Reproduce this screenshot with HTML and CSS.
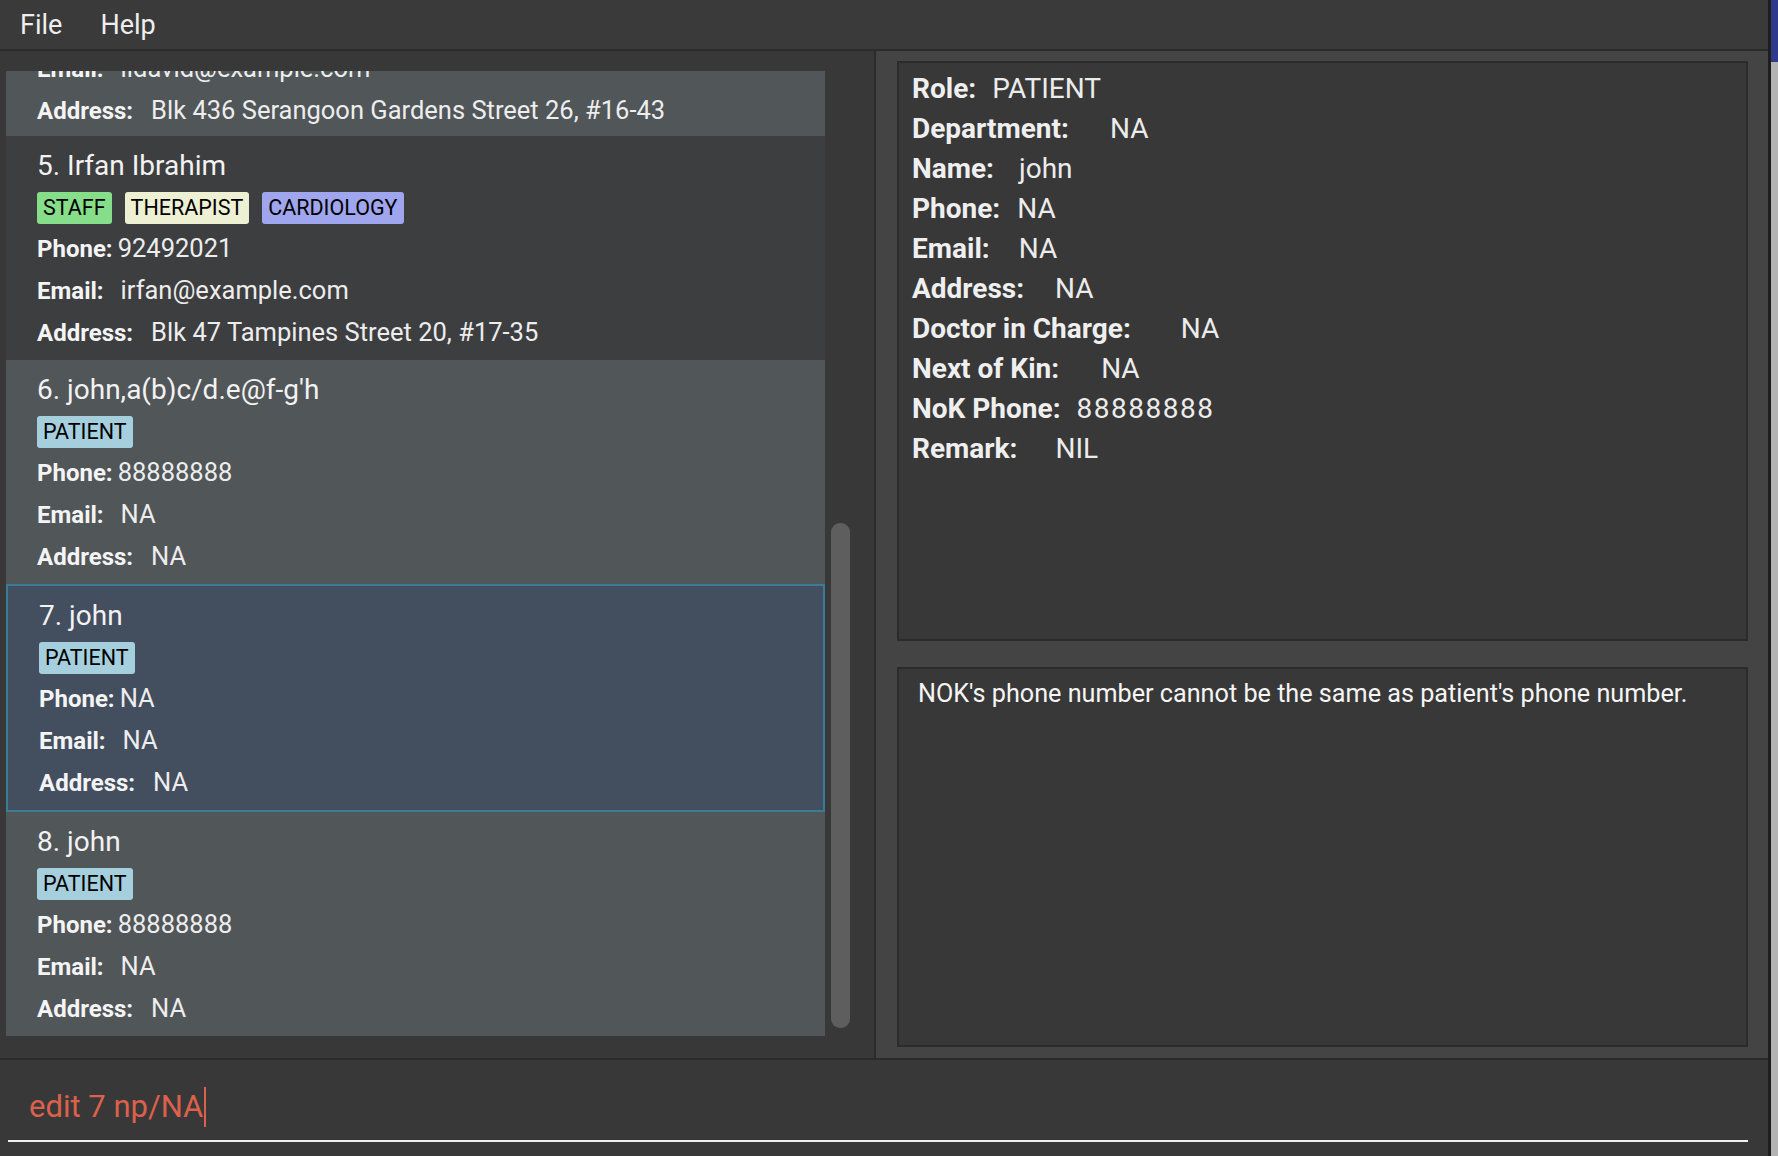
FILE: index.html
```html
<!DOCTYPE html>
<html>
<head>
<meta charset="utf-8">
<link rel="stylesheet" href="styles.css">
</head>
<body>
<div class="screen">
  <div class="window">
    <div class="menubar">
      <span class="menu-item">File</span>
      <span class="menu-item">Help</span>
    </div>
    <div class="main">
      <div class="left">
        <div class="list-wrap">
          <div class="list">
            <div class="card light first">
              <div class="row clipped"><span class="lbl">Email:</span><span class="val g-email">lidavid@example.com</span></div>
              <div class="row"><span class="lbl">Address:</span><span class="val g-addr">Blk 436 Serangoon Gardens Street 26, #16-43</span></div>
            </div>
            <div class="card dark">
              <div class="name">5. Irfan Ibrahim</div>
              <div class="tags"><span class="tag staff">STAFF</span><span class="tag therapist">THERAPIST</span><span class="tag cardio">CARDIOLOGY</span></div>
              <div class="row"><span class="lbl">Phone:</span><span class="val g-phone">92492021</span></div>
              <div class="row"><span class="lbl">Email:</span><span class="val g-email">irfan@example.com</span></div>
              <div class="row"><span class="lbl">Address:</span><span class="val g-addr">Blk 47 Tampines Street 20, #17-35</span></div>
            </div>
            <div class="card light">
              <div class="name">6. john,a(b)c/d.e@f-g'h</div>
              <div class="tags"><span class="tag patient">PATIENT</span></div>
              <div class="row"><span class="lbl">Phone:</span><span class="val g-phone">88888888</span></div>
              <div class="row"><span class="lbl">Email:</span><span class="val g-email">NA</span></div>
              <div class="row"><span class="lbl">Address:</span><span class="val g-addr">NA</span></div>
            </div>
            <div class="card selected">
              <div class="name">7. john</div>
              <div class="tags"><span class="tag patient">PATIENT</span></div>
              <div class="row"><span class="lbl">Phone:</span><span class="val g-phone">NA</span></div>
              <div class="row"><span class="lbl">Email:</span><span class="val g-email">NA</span></div>
              <div class="row"><span class="lbl">Address:</span><span class="val g-addr">NA</span></div>
            </div>
            <div class="card light">
              <div class="name">8. john</div>
              <div class="tags"><span class="tag patient">PATIENT</span></div>
              <div class="row"><span class="lbl">Phone:</span><span class="val g-phone">88888888</span></div>
              <div class="row"><span class="lbl">Email:</span><span class="val g-email">NA</span></div>
              <div class="row"><span class="lbl">Address:</span><span class="val g-addr">NA</span></div>
            </div>
          </div>
          <div class="scroll-track">
            <div class="thumb"></div>
          </div>
        </div>
      </div>
      <div class="right">
        <div class="box details">
          <div class="drow"><span class="dlbl">Role:</span><span class="dval g16">PATIENT</span></div>
          <div class="drow"><span class="dlbl">Department:</span><span class="dval g41">NA</span></div>
          <div class="drow"><span class="dlbl">Name:</span><span class="dval g25">john</span></div>
          <div class="drow"><span class="dlbl">Phone:</span><span class="dval g17">NA</span></div>
          <div class="drow"><span class="dlbl">Email:</span><span class="dval g29">NA</span></div>
          <div class="drow"><span class="dlbl">Address:</span><span class="dval g31">NA</span></div>
          <div class="drow"><span class="dlbl">Doctor in Charge:</span><span class="dval g50">NA</span></div>
          <div class="drow"><span class="dlbl">Next of Kin:</span><span class="dval g42">NA</span></div>
          <div class="drow"><span class="dlbl">NoK Phone:</span><span class="dval g16 digits">88888888</span></div>
          <div class="drow"><span class="dlbl">Remark:</span><span class="dval g38">NIL</span></div>
        </div>
        <div class="box message">
          <div class="msg">NOK's phone number cannot be the same as patient's phone number.</div>
        </div>
      </div>
    </div>
    <div class="command">
      <div class="cmd-line"><span class="cmd-text">edit 7 np/NA</span><span class="caret"></span></div>
    </div>
  </div>
  <div class="edge"><div class="edge-top"></div></div>
</div>
</body>
</html>
```
FILE: styles.css
```css
html, body {
  margin: 0;
  padding: 0;
}
body {
  width: 1778px;
  height: 1156px;
  overflow: hidden;
  background: #383838;
  font-family: Roboto, "Liberation Sans", sans-serif;
  color: #f2f2f2;
}
.screen {
  display: flex;
  width: 1778px;
  height: 1156px;
}
.window {
  width: 1768px;
  display: flex;
  flex-direction: column;
}
.edge {
  width: 7px;
  border-left: 3px solid #1e1e1e;
  background: #b4b4b4;
}
.edge-top {
  height: 62px;
  background: #2f3a8c;
}
.menubar {
  height: 49px;
  background: #3a3a3a;
  border-bottom: 2px solid #2b2b2b;
  display: flex;
  align-items: center;
  padding-left: 20px;
  gap: 38px;
}
.menu-item {
  font-size: 27px;
  color: #eeeeee;
  line-height: 46px;
}
.main {
  height: 1007px;
  display: flex;
  border-bottom: 2px solid #2b2b2b;
}
.left {
  width: 876px;
  border-right: 2px solid #2b2b2b;
  background: #383838;
  padding-top: 20px;
  box-sizing: border-box;
}
.list-wrap {
  display: flex;
  height: 965px;
}
.list {
  margin-left: 6px;
  width: 819px;
  overflow: hidden;
}
.scroll-track {
  flex: 1;
  position: relative;
}
.thumb {
  position: absolute;
  left: 6px;
  top: 452px;
  width: 19px;
  height: 505px;
  background: #5e5e5e;
  border-radius: 9px;
}
.card {
  height: 224px;
  box-sizing: border-box;
  padding: 12px 0 0 31px;
}
.card.first {
  height: 65px;
  padding-top: 0;
  overflow: hidden;
}
.row.clipped {
  margin-top: -24px;
}
.card.light {
  background: #515659;
}
.card.dark {
  background: #3d3e40;
}
.card.selected {
  background: #434e5f;
  border: 2px solid #3a7c94;
  height: 228px;
  padding-left: 31px;
  padding-top: 12px;
}
.name {
  font-size: 28px;
  line-height: 36px;
  color: #f2f2f2;
}
.tags {
  display: flex;
  gap: 13px;
  margin-top: 8px;
  height: 32px;
  margin-bottom: 3px;
}
.tag {
  font-size: 21.5px;
  line-height: 32px;
  height: 32px;
  padding: 0 6px;
  border-radius: 3px;
  color: #000;
}
.tag.staff { background: #86dd8a; }
.tag.therapist { background: #eef0d4; }
.tag.cardio { background: #a0a6ee; }
.tag.patient { background: #a6cfdd; }
.row {
  line-height: 42px;
  height: 42px;
  white-space: nowrap;
}
.lbl {
  font-weight: 700;
  font-size: 24px;
  color: #f4f4f4;
}
.val {
  font-size: 25.5px;
  color: #ededed;
}
.g-phone { margin-left: 5px; }
.g-email { margin-left: 17px; }
.g-addr { margin-left: 18px; }
.right {
  flex: 1;
  background: #444444;
  padding: 10px 20px 11px 21px;
  display: flex;
  flex-direction: column;
  gap: 26px;
}
.box {
  background: #383838;
  border: 2px solid #2b2b2b;
  box-sizing: border-box;
}
.details {
  height: 580px;
  padding: 6px 0 0 13px;
}
.message {
  height: 380px;
  padding: 10px 0 0 19px;
}
.drow {
  height: 40px;
  line-height: 40px;
  white-space: nowrap;
}
.dlbl {
  font-weight: 700;
  font-size: 28px;
  color: #efefef;
}
.dval {
  font-size: 28px;
  color: #ececec;
}
.dval.digits {
  letter-spacing: 1.5px;
}
.g16 { margin-left: 16px; }
.g17 { margin-left: 17px; }
.g25 { margin-left: 25px; }
.g29 { margin-left: 29px; }
.g31 { margin-left: 31px; }
.g38 { margin-left: 38px; }
.g41 { margin-left: 41px; }
.g42 { margin-left: 42px; }
.g50 { margin-left: 50px; }
.msg {
  font-size: 25.2px;
  line-height: 30px;
  color: #f5f5f5;
}
.command {
  flex: 1;
  background: #383838;
  padding: 20px 20px 0 8px;
}
.cmd-line {
  height: 62px;
  box-sizing: border-box;
  padding: 0 0 6px 21px;
  border-bottom: 2px solid #f0f0f0;
  display: flex;
  align-items: center;
}
.cmd-text {
  font-size: 31px;
  color: #dc614b;
  line-height: 42px;
}
.caret {
  width: 2px;
  height: 40px;
  background: #dc614b;
  margin-left: 1px;
}
```
